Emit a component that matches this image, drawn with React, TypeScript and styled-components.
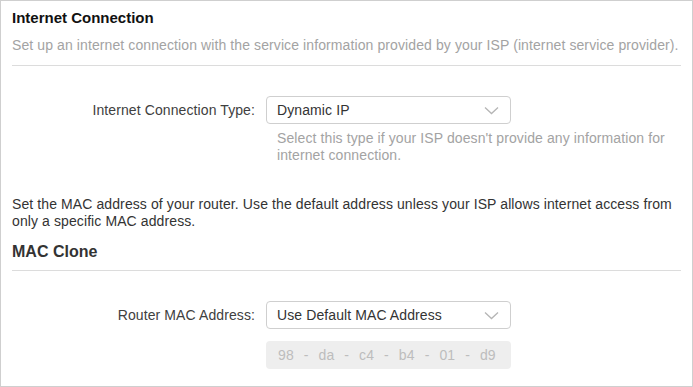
import React from 'react';
import styled, { createGlobalStyle } from 'styled-components';

const GlobalStyle = createGlobalStyle`
  body {
    margin: 0;
    background: #fff;
    font-family: 'Liberation Sans', Arial, sans-serif;
  }
`;

const Panel = styled.div`
  width: 693px;
  height: 387px;
  box-sizing: border-box;
  border: 1px solid #cfcfcf;
  padding: 8px 11px 0;
  font-size: 14px;
  letter-spacing: 0.1px;
  color: #333;
`;

const Title = styled.h3`
  margin: 0;
  font-size: 15px;
  line-height: 18px;
  font-weight: bold;
  letter-spacing: 0;
  color: #111;
`;

const Description = styled.p`
  margin: 10px 0 0;
  padding-bottom: 11px;
  border-bottom: 1px solid #dcdcdc;
  line-height: 17px;
  color: #a3a3a3;
`;

const SectionTitle = styled.h3`
  margin: 13.5px 0 0;
  padding-bottom: 9px;
  border-bottom: 1px solid #dcdcdc;
  font-size: 16px;
  line-height: 18px;
  font-weight: bold;
  letter-spacing: 0;
  color: #333;
`;

const Row = styled.div`
  display: grid;
  grid-template-columns: 243px 1fr;
  column-gap: 11px;
  margin-top: 30px;
`;

const Label = styled.label`
  text-align: right;
  line-height: 28px;
  color: #404040;
`;

const Field = styled.div`
  display: flex;
  flex-direction: column;
`;

const Select = styled.div`
  width: 245px;
  height: 28px;
  box-sizing: border-box;
  display: flex;
  align-items: center;
  justify-content: space-between;
  padding: 0 11px 0 10px;
  border: 1px solid #cfcfcf;
  border-radius: 4px;
  color: #333;
`;

const Hint = styled.div`
  margin-top: 5.5px;
  padding-left: 11px;
  line-height: 17px;
  color: #a3a3a3;
`;

const Paragraph = styled.p`
  margin: 32px 0 0;
  line-height: 17px;
  color: #333;
`;

const MacBox = styled.div`
  width: 245px;
  height: 28px;
  box-sizing: border-box;
  margin-top: 12px;
  padding-left: 12px;
  display: flex;
  align-items: center;
  gap: 10px;
  background: #eeeeee;
  border-radius: 4px;
  color: #bdbdbd;
`;

const Chevron = () => (
  <svg width="15" height="9" viewBox="0 0 15 9">
    <polyline
      points="1,1.5 7.5,7.5 14,1.5"
      fill="none"
      stroke="#b5b5b5"
      strokeWidth="1.3"
    />
  </svg>
);

const mac = ['98', 'da', 'c4', 'b4', '01', 'd9'];

const App = () => {
  return (
    <>
      <GlobalStyle />
      <Panel>
        <Title>Internet Connection</Title>
        <Description>
          Set up an internet connection with the service information provided by
          your ISP (internet service provider).
        </Description>

        <Row>
          <Label>Internet Connection Type:</Label>
          <Field>
            <Select>
              <span>Dynamic IP</span>
              <Chevron />
            </Select>
            <Hint>
              Select this type if your ISP doesn't provide any information for
              internet connection.
            </Hint>
          </Field>
        </Row>

        <Paragraph>
          Set the MAC address of your router. Use the default address unless your
          ISP allows internet access from only a specific MAC address.
        </Paragraph>

        <SectionTitle>MAC Clone</SectionTitle>

        <Row>
          <Label>Router MAC Address:</Label>
          <Field>
            <Select>
              <span>Use Default MAC Address</span>
              <Chevron />
            </Select>
            <MacBox>
              {mac.map((part, i) => (
                <React.Fragment key={part}>
                  {i > 0 && <span>-</span>}
                  <span>{part}</span>
                </React.Fragment>
              ))}
            </MacBox>
          </Field>
        </Row>
      </Panel>
    </>
  );
};

export default App;
